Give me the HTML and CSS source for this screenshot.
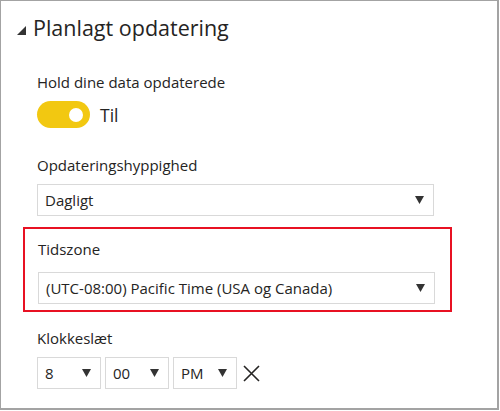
FILE: index.html
```html
<!DOCTYPE html>
<html lang="da">
<head>
<meta charset="utf-8">
<link rel="stylesheet" href="styles.css">
</head>
<body>
<div class="panel">
  <div class="header">
    <svg class="caret" width="9" height="9" viewBox="0 0 9 9"><polygon points="9,0 9,9 0,9" fill="#333"/></svg>
    <span class="title">Planlagt opdatering</span>
  </div>
  <div class="content">
    <div class="group">
      <div class="label">Hold dine data opdaterede</div>
      <div class="toggle-row">
        <div class="toggle"><div class="knob"></div></div>
        <span class="toggle-text">Til</span>
      </div>
    </div>
    <div class="group freq">
      <div class="label">Opdateringshyppighed</div>
      <div class="select wide"><span>Dagligt</span><svg class="arrow" width="9" height="8" viewBox="0 0 9 8"><polygon points="0,0 9,0 4.5,8" fill="#333"/></svg></div>
    </div>
    <div class="highlight">
      <div class="label">Tidszone</div>
      <div class="select wide"><span>(UTC-08:00) Pacific Time (USA og Canada)</span><svg class="arrow" width="9" height="8" viewBox="0 0 9 8"><polygon points="0,0 9,0 4.5,8" fill="#333"/></svg></div>
    </div>
    <div class="group time">
      <div class="label">Klokkeslæt</div>
      <div class="time-row">
        <div class="select small"><span>8</span><svg class="arrow" width="9" height="8" viewBox="0 0 9 8"><polygon points="0,0 9,0 4.5,8" fill="#333"/></svg></div>
        <div class="select small"><span>00</span><svg class="arrow" width="9" height="8" viewBox="0 0 9 8"><polygon points="0,0 9,0 4.5,8" fill="#333"/></svg></div>
        <div class="select small"><span>PM</span><svg class="arrow" width="9" height="8" viewBox="0 0 9 8"><polygon points="0,0 9,0 4.5,8" fill="#333"/></svg></div>
        <svg class="close" width="17" height="17" viewBox="0 0 17 17"><path d="M1 1 L16 16 M16 1 L1 16" stroke="#252423" stroke-width="1.6" fill="none"/></svg>
      </div>
    </div>
  </div>
</div>
</body>
</html>
```

FILE: styles.css
```css
* { box-sizing: border-box; }
html, body { margin: 0; padding: 0; background: #fff; }
body {
  font-family: "Open Sans", "Noto Sans", sans-serif;
  color: #252423;
}
.panel {
  width: 499px;
  height: 410px;
  border: 1px solid #a3a3a3;
  border-right-width: 2px;
  border-bottom-width: 2px;
  background: #fff;
}
.header {
  display: flex;
  align-items: center;
  padding: 11px 0 0 16px;
  height: 42px;
}
.caret { margin-top: 6px; margin-right: 7px; }
.title {
  font-size: 21.5px;
  line-height: 30px;
  color: #252423;
}
.content {
  padding-left: 21px;
}
.group { padding-left: 15px; }
.label {
  font-size: 15px;
  line-height: 20px;
  color: #252423;
}
.group:first-child { padding-top: 29px; }
.toggle-row {
  display: flex;
  align-items: center;
  margin-top: 9px;
}
.toggle {
  width: 53px;
  height: 27px;
  border-radius: 13.5px;
  background: #f2c811;
  position: relative;
}
.knob {
  position: absolute;
  width: 14px;
  height: 14px;
  border-radius: 50%;
  background: #fff;
  left: 32px;
  top: 6.5px;
}
.toggle-text {
  font-size: 17.5px;
  margin-left: 10px;
  line-height: 26px;
}
.freq { margin-top: 27px; }
.freq .label { margin-bottom: 9px; }
.select {
  display: flex;
  align-items: center;
  justify-content: space-between;
  height: 32px;
  border: 1px solid #d9d9d9;
  background: #fff;
  font-size: 15px;
  padding: 0 9px 0 7px;
}
.select.wide { width: 397px; }
.highlight {
  margin-top: 11px;
  margin-left: 1px;
  width: 429px;
  height: 85px;
  border: 2px solid #e81123;
  padding: 10px 0 0 13px;
}
.highlight .label { margin-bottom: 13px; }
.time { margin-top: 16px; }
.time .label { margin-bottom: 9px; }
.time-row {
  display: flex;
  align-items: center;
  gap: 4px;
}
.select.small { width: 64px; }
.close { margin-left: 2px; }
```
